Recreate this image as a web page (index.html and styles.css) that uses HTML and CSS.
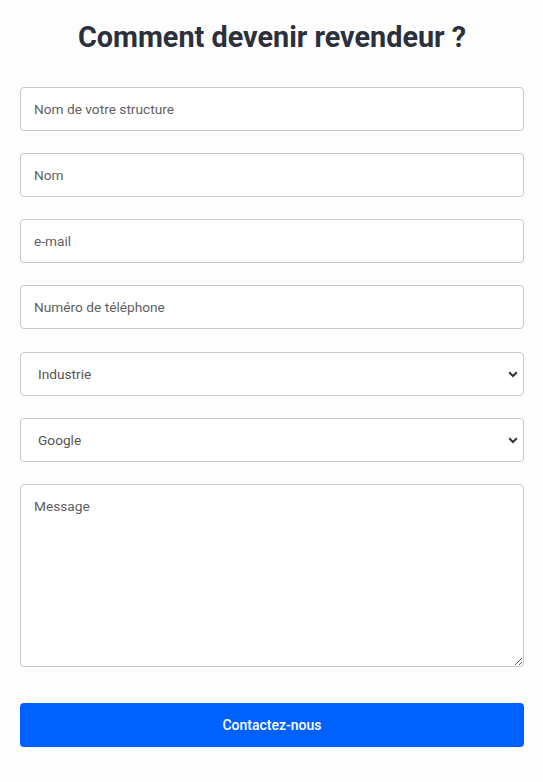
FILE: index.html
```html
<!DOCTYPE html>
<html lang="fr">
<head>
<meta charset="utf-8">
<title>Comment devenir revendeur ?</title>
<link rel="stylesheet" href="styles.css">
</head>
<body>
<main class="page">
  <h1 class="title">Comment devenir revendeur ?</h1>
  <form class="form">
    <input class="field" type="text" placeholder="Nom de votre structure">
    <input class="field" type="text" placeholder="Nom">
    <input class="field" type="email" placeholder="e-mail">
    <input class="field" type="tel" placeholder="Numéro de téléphone">
    <div class="select-wrap first-select">
      <select class="field select">
        <option>Industrie</option>
      </select>
      <svg class="chevron" width="10" height="7" viewBox="0 0 10 7"><path d="M1.2 1.3 L5 5 L8.8 1.3" fill="none" stroke="#333" stroke-width="2"/></svg>
    </div>
    <div class="select-wrap">
      <select class="field select">
        <option>Google</option>
      </select>
      <svg class="chevron" width="10" height="7" viewBox="0 0 10 7"><path d="M1.2 1.3 L5 5 L8.8 1.3" fill="none" stroke="#333" stroke-width="2"/></svg>
    </div>
    <textarea class="field message" placeholder="Message"></textarea>
    <button class="submit" type="button">Contactez-nous</button>
  </form>
</main>
</body>
</html>
```
FILE: styles.css
```css
html, body {
  margin: 0;
  background: #fdfdfd;
}
body {
  font-family: Roboto, "Liberation Sans", sans-serif;
}
.page {
  padding: 0 19px 0 20px;
}
.title {
  margin: 0;
  padding-top: 18px;
  height: 87px;
  box-sizing: border-box;
  text-align: center;
  font-size: 28.8px;
  line-height: 38px;
  font-weight: 700;
  color: #2b303c;
}
.form {
  display: flex;
  flex-direction: column;
  gap: 22px;
}
.field {
  display: block;
  width: 100%;
  box-sizing: border-box;
  height: 44px;
  margin: 0;
  padding: 0 13px;
  border: 1px solid #c9c9c9;
  border-radius: 4px;
  background: #fff;
  font-family: Roboto, "Liberation Sans", sans-serif;
  font-size: 13.7px;
  color: #555;
  outline: none;
}
.field::placeholder {
  color: #5f5f5f;
  opacity: 1;
}
.select-wrap {
  position: relative;
}
.first-select {
  margin-top: 1px;
}
.select {
  appearance: none;
  -webkit-appearance: none;
  padding-left: 17px;
  color: #555;
}
.chevron {
  position: absolute;
  right: 6px;
  top: 19px;
  pointer-events: none;
}
.message {
  height: 183px;
  padding-top: 11px;
  resize: vertical;
  line-height: 20px;
}
.submit {
  display: block;
  width: 100%;
  height: 44px;
  margin-top: 14px;
  border: none;
  border-radius: 4px;
  background: #0062fe;
  color: #fff;
  font-family: Roboto, "Liberation Sans", sans-serif;
  font-size: 14px;
  font-weight: 500;
}
```
